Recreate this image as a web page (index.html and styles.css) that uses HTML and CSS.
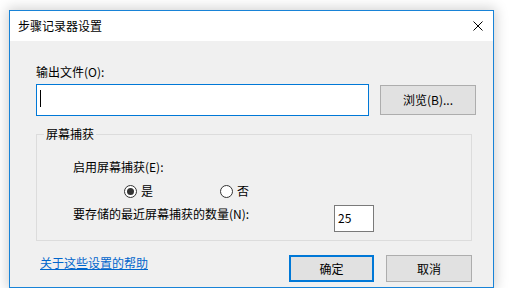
FILE: index.html
```html
<!DOCTYPE html>
<html lang="zh-CN">
<head>
<meta charset="utf-8">
<title>步骤记录器设置</title>
<link rel="stylesheet" href="styles.css">
</head>
<body>
<div class="window">
  <div class="titlebar">
    <span class="title">步骤记录器设置</span>
    <svg class="close" width="10" height="10" viewBox="0 0 10 10"><path d="M0.5 0.5 L9.5 9.5 M9.5 0.5 L0.5 9.5" stroke="#000" stroke-width="1" fill="none"/></svg>
  </div>
  <div class="content">
    <div class="label">输出文件(O):</div>
    <div class="file-row">
      <div class="textbox"><span class="caret"></span></div>
      <div class="button browse">浏览(B)...</div>
    </div>
    <fieldset class="group">
      <legend>屏幕捕获</legend>
      <div class="inner-label">启用屏幕捕获(E):</div>
      <div class="radio-row">
        <div class="radio-item first"><span class="radio checked"></span><span>是</span></div>
        <div class="radio-item"><span class="radio"></span><span>否</span></div>
      </div>
      <div class="count-row">
        <div class="count-label">要存储的最近屏幕捕获的数量(N):</div>
        <div class="numbox">25</div>
      </div>
    </fieldset>
    <div class="bottom-row">
      <a class="help" href="#">关于这些设置的帮助</a>
      <div class="buttons">
        <div class="button ok">确定</div>
        <div class="button cancel">取消</div>
      </div>
    </div>
  </div>
</div>
</body>
</html>
```
FILE: styles.css
```css
html, body {
  margin: 0;
  padding: 0;
  background: #ffffff;
}
body {
  padding: 10px 0 0 9px;
  font-family: "Noto Sans CJK SC", "Noto Sans", sans-serif;
  font-size: 12px;
  line-height: 16px;
  color: #000;
}
.window {
  width: 483px;
  height: 276px;
  border: 1px solid #1883d7;
  background: #f0f0f0;
  box-shadow: 0 0 12px 2px rgba(0, 0, 0, 0.18);
  display: flex;
  flex-direction: column;
}
.titlebar {
  height: 30px;
  background: #ffffff;
  display: flex;
  align-items: center;
  justify-content: space-between;
  padding: 0 10px 0 8px;
}
.title {
  margin-top: -1px;
}
.close {
  display: block;
}
.content {
  padding: 23px 0 0 26px;
}
.label {
  height: 16px;
}
.file-row {
  margin-top: 4px;
  display: flex;
  align-items: center;
  gap: 11px;
}
.textbox {
  box-sizing: border-box;
  width: 333px;
  height: 32px;
  background: #fff;
  border: 1px solid #0078d7;
  display: flex;
  align-items: center;
  padding-left: 3px;
}
.caret {
  width: 1px;
  height: 17px;
  background: #000;
  margin-top: -4px;
}
.button {
  box-sizing: border-box;
  background: #e1e1e1;
  border: 1px solid #adadad;
  display: flex;
  align-items: center;
  justify-content: center;
}
.browse {
  width: 96px;
  height: 30px;
}
.group {
  margin: 10px 0 0 0;
  width: 436px;
  box-sizing: border-box;
  border: 1px solid #dcdcdc;
  padding: 0 0 8px 36px;
  min-width: 0;
}
.group legend {
  padding: 0 2px;
  margin-left: -29px;
  line-height: 16px;
}
.inner-label {
  margin-top: 17px;
}
.radio-row {
  margin-top: 8px;
  padding-left: 51px;
  display: flex;
  height: 16px;
  align-items: center;
}
.radio-item {
  display: flex;
  align-items: center;
  gap: 4px;
}
.radio-item.first {
  width: 96px;
}
.radio {
  box-sizing: border-box;
  width: 13px;
  height: 13px;
  border: 1px solid #333;
  border-radius: 50%;
  background: #fff;
  display: flex;
  align-items: center;
  justify-content: center;
}
.radio.checked::after {
  content: "";
  width: 7px;
  height: 7px;
  border-radius: 50%;
  background: #333;
}
.count-row {
  margin-top: 6px;
  display: flex;
  align-items: flex-start;
}
.count-label {
  width: 261px;
  margin-top: 1px;
}
.numbox {
  box-sizing: border-box;
  width: 40px;
  height: 27px;
  background: #fff;
  border: 1px solid #7a7a7a;
  padding: 4px 0 0 3px;
}
.bottom-row {
  margin-top: 14px;
  display: flex;
  justify-content: space-between;
  align-items: flex-start;
  width: 436px;
}
.help {
  color: #0066cc;
  text-decoration: underline;
  margin: 0 0 0 4px;
  padding-top: 0;
}
.buttons {
  display: flex;
  gap: 12px;
}
.ok {
  width: 85px;
  height: 27px;
  border: 2px solid #0078d7;
}
.cancel {
  width: 86px;
  height: 27px;
}
```
